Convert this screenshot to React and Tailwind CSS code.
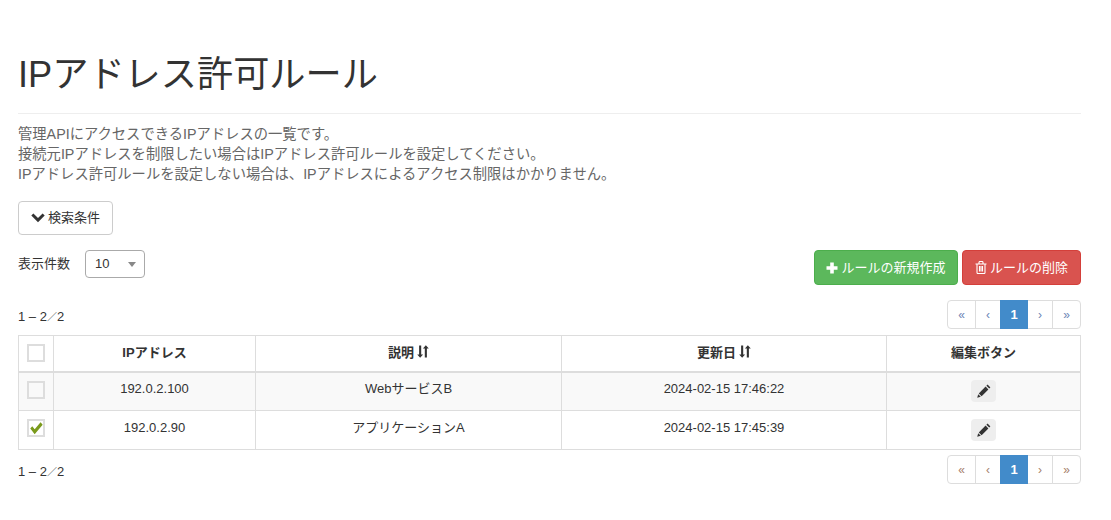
import React from "react";

const font = { fontFamily: '"Liberation Sans","Noto Sans CJK JP",sans-serif' };

function Pager({ color }) {
  const cell = `flex h-[29px] items-center justify-center border border-[#ddd] bg-white text-[12px] ${color}`;
  return (
    <div className="flex">
      <span className={`${cell} w-[29px] rounded-l-[4px]`}>«</span>
      <span className={`${cell} -ml-px w-[26px]`}>‹</span>
      <span className="relative -ml-px flex h-[29px] w-[28px] items-center justify-center bg-[#428bca] text-[13px] font-bold text-white">1</span>
      <span className={`${cell} -ml-px w-[26px]`}>›</span>
      <span className={`${cell} -ml-px w-[29px] rounded-r-[4px]`}>»</span>
    </div>
  );
}

function Pencil() {
  return (
    <svg width="14" height="14" viewBox="0 0 14 14" className="fill-[#333]">
      <path d="M10.6 0.6 13.4 3.4 12.2 4.6 9.4 1.8Z" />
      <path d="M8.6 2.6 11.4 5.4 4.6 12.2 1.8 9.4Z" />
      <path d="M1.2 10.2 3.8 12.8 0.2 13.8Z" />
    </svg>
  );
}

function SortIcon() {
  return (
    <svg width="12" height="13" viewBox="0 0 12 13" className="fill-[#333] ml-[3px] inline-block align-[-1px]">
      <path d="M2.1 0.5h2.1v9h1.9L3.15 12.8 0.2 9.5h1.9Z" />
      <path d="M7.8 12.5h2.1v-9h1.9L8.85 0.2 5.9 3.5h1.9Z" />
    </svg>
  );
}

function Check({ checked, faded }) {
  return (
    <span className={`flex h-[18px] w-[18px] items-center justify-center border-2 border-[#ddd] ${faded ? "bg-[#f9f9f9]" : "bg-white"}`}>
      {checked && (
        <svg width="13" height="13" viewBox="0 0 15 13" preserveAspectRatio="none" className="fill-[#7a9a1c]">
          <path d="M0.3 6.6 2.6 4.3 5.4 7.2 12.2 0.3 14.6 2.7 5.4 12.2Z" />
        </svg>
      )}
    </span>
  );
}

function Row({ ip, desc, date, checked, striped }) {
  const td = `border-l border-[#ddd] text-center align-top text-[13px] leading-[20px] ${striped ? "pt-[6px]" : "pt-[7px]"}`;
  return (
    <tr className={`h-[39px] border-b border-[#ddd] ${striped ? "bg-[#f9f9f9]" : "bg-white"}`}>
      <td className="border-l border-[#ddd] pl-[8px] pt-[8px] align-top"><Check checked={checked} faded={striped} /></td>
      <td className={td}>{ip}</td>
      <td className={td}>{desc}</td>
      <td className={td}>{date}</td>
      <td className="border-x border-[#ddd] align-middle">
        <span className="ml-[84px] flex h-[22px] w-[25px] items-center justify-center rounded-[4px] bg-[#eee]"><Pencil /></span>
      </td>
    </tr>
  );
}

function Count() {
  return (
    <span className="pt-[6px] text-[13px] text-[#333]">
      1 – 2<span className="text-[10px]">／</span>2
    </span>
  );
}

export default function App() {
  return (
    <div className="h-[520px] w-[1111px] overflow-hidden bg-white px-[18px] pt-[47px] text-[13px] leading-[20px] text-[#333]" style={font}>
      <div className="w-[1063px]">
        <h1 className="text-[36.2px] font-normal leading-[56px] text-[#333]">IPアドレス許可ルール</h1>
        <hr className="mt-[10px] border-t border-[#eee]" />
        <div className="mt-[10px] text-[14.3px] leading-[20px] text-[#666]">
          <p>管理APIにアクセスできるIPアドレスの一覧です。</p>
          <p>接続元IPアドレスを制限したい場合はIPアドレス許可ルールを設定してください。</p>
          <p>IPアドレス許可ルールを設定しない場合は、IPアドレスによるアクセス制限はかかりません。</p>
        </div>
        <button className="mt-[17px] flex h-[34px] w-[95px] items-center justify-center gap-[3px] rounded-[4px] border border-[#ccc] bg-white text-[13px] text-[#333]">
          <svg width="14" height="10" viewBox="0 0 14 10" className="fill-[#333]"><path d="M0.3 2.6 2.4 0.5 7 5 11.6 0.5 13.7 2.6 7 9.3Z" /></svg>
          検索条件
        </button>
        <div className="mt-[15px] flex items-start justify-between">
          <div className="flex items-start">
            <span className="mt-[4px] w-[67px] text-[13px]">表示件数</span>
            <span className="flex h-[28px] w-[60px] items-center justify-between rounded-[4px] border border-[#aaa] bg-white pl-[9px] pr-[8px] text-[13px]">
              10
              <span className="h-0 w-0 border-x-[4px] border-t-[5px] border-x-transparent border-t-[#888]" />
            </span>
          </div>
          <div className="flex gap-[4px]">
            <button className="flex h-[35px] w-[144px] items-center justify-center gap-[3px] rounded-[4px] border border-[#4cae4c] bg-[#5cb85c] text-[13px] text-white">
              <svg width="12" height="12" viewBox="0 0 12 12" className="fill-white"><path d="M4.2 0.5h3.6v3.7h3.7v3.6H7.8v3.7H4.2V7.8H0.5V4.2h3.7Z" /></svg>
              ルールの新規作成
            </button>
            <button className="flex h-[35px] w-[119px] items-center justify-center gap-[3px] rounded-[4px] border border-[#d43f3a] bg-[#d9534f] text-[13px] text-white">
              <svg width="12" height="13" viewBox="0 0 12 13" fill="none" stroke="white" strokeWidth="1.1"><path d="M0.5 3h11M2 3v8.6c0 .5.3.9.8.9h6.4c.5 0 .8-.4.8-.9V3M4 3V1.4c0-.5.3-.9.8-.9h2.4c.5 0 .8.4.8.9V3M4.5 5v5.5M6 5v5.5M7.5 5v5.5" /></svg>
              ルールの削除
            </button>
          </div>
        </div>
        <div className="mt-[15px] flex items-center justify-between">
          <Count />
          <Pager color="text-[#6b85b5]" />
        </div>
        <table className="mt-[6px] w-[1062px] table-fixed border-collapse">
          <colgroup>
            <col className="w-[35px]" />
            <col className="w-[202px]" />
            <col className="w-[306px]" />
            <col className="w-[325px]" />
            <col className="w-[194px]" />
          </colgroup>
          <thead>
            <tr className="h-[36px] border-y border-b-2 border-[#ddd] text-[13px] font-bold">
              <th className="border-l border-[#ddd] pl-[8px] align-middle"><Check /></th>
              <th className="border-l border-[#ddd] text-center">IPアドレス</th>
              <th className="border-l border-[#ddd] text-center">説明<SortIcon /></th>
              <th className="border-l border-[#ddd] text-center">更新日<SortIcon /></th>
              <th className="border-x border-[#ddd] text-center">編集ボタン</th>
            </tr>
          </thead>
          <tbody>
            <Row ip="192.0.2.100" desc="WebサービスB" date="2024-02-15 17:46:22" striped />
            <Row ip="192.0.2.90" desc="アプリケーションA" date="2024-02-15 17:45:39" checked />
          </tbody>
        </table>
        <div className="mt-[5px] flex items-center justify-between">
          <Count />
          <Pager color="text-[#a5806a]" />
        </div>
      </div>
    </div>
  );
}
